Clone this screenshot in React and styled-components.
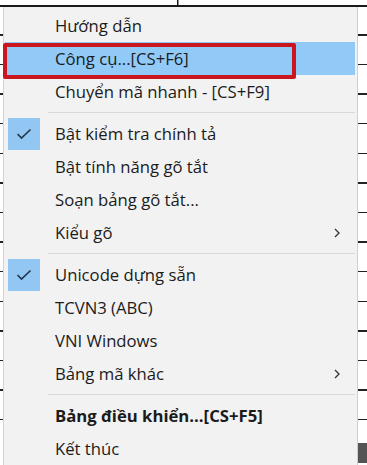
import React from "react";
import styled, { createGlobalStyle } from "styled-components";

const GlobalStyle = createGlobalStyle`
  html, body { margin: 0; padding: 0; background: #ffffff; }
  body { font-family: "Open Sans", "Noto Sans", sans-serif; }
`;

const Page = styled.div`
  position: relative;
  width: 367px;
  height: 465px;
  overflow: hidden;
  box-sizing: border-box;
  padding: 7px 0 0 3px;
  background-color: #ffffff;
  background-image:
    linear-gradient(#1a1a1a, #1a1a1a),
    linear-gradient(#1a1a1a, #1a1a1a),
    linear-gradient(#555555, #555555),
    repeating-linear-gradient(
      to bottom,
      transparent 0px,
      transparent 28.2px,
      #222222 28.2px,
      #222222 29.6px
    );
  background-size: 367px 2px, 1.5px 6px, 9px 20px, 367px 440px;
  background-position: 0 5px, 176.5px 0, 358px 443px, 0 6px;
  background-repeat: no-repeat;
`;

const Menu = styled.div`
  position: relative;
  width: 355px;
  height: 470px;
  box-sizing: border-box;
  padding-top: 2px;
  background: #f2f2f2;
  border-left: 1px solid #d4d4d4;
  border-right: 1px solid #cfcfcf;
  display: flex;
  flex-direction: column;
`;

const Item = styled.div`
  height: 33px;
  margin: 0 2px 0 1px;
  display: grid;
  grid-template-columns: 32px 1fr 24px;
  align-items: center;
  column-gap: 15px;
  padding-left: 3px;
  box-sizing: border-box;
  background: ${(p) => (p.$active ? "#91c9f7" : "transparent")};
  color: #1b1b1b;
  font-size: 16.7px;
  font-weight: ${(p) => (p.$bold ? 700 : 400)};
  white-space: nowrap;
`;

const CheckCell = styled.div`
  width: 32px;
  height: 32px;
  display: flex;
  align-items: center;
  justify-content: center;
  background: ${(p) => (p.$on ? "#92c7f3" : "transparent")};
`;

const Label = styled.span`
  line-height: 33px;
`;

const Arrow = styled.div`
  display: flex;
  align-items: center;
  padding-left: 2px;
`;

const Separator = styled.div`
  height: 9px;
  margin: 0 2px 0 44px;
  display: flex;
  align-items: center;
  &::before {
    content: "";
    display: block;
    width: 100%;
    height: 1px;
    background: #d8d8d8;
  }
`;

const Callout = styled.div`
  position: absolute;
  left: 3px;
  top: 43px;
  width: 293px;
  height: 36px;
  box-sizing: border-box;
  border: 4px solid #c9161f;
  border-radius: 2px;
  pointer-events: none;
`;

const Check = () => (
  <svg width="16" height="12" viewBox="0 0 16 12">
    <polyline
      points="1.5,6 5.5,10 14.5,1.5"
      fill="none"
      stroke="#23384f"
      strokeWidth="1.7"
    />
  </svg>
);

const Chevron = () => (
  <svg width="8" height="10" viewBox="0 0 8 10">
    <polyline
      points="2,1 6,5 2,9"
      fill="none"
      stroke="#333333"
      strokeWidth="1.3"
    />
  </svg>
);

const items = [
  { label: "Hướng dẫn" },
  { label: "Công cụ...[CS+F6]", active: true },
  { label: "Chuyển mã nhanh - [CS+F9]" },
  { sep: true },
  { label: "Bật kiểm tra chính tả", checked: true },
  { label: "Bật tính năng gõ tắt" },
  { label: "Soạn bảng gõ tắt..." },
  { label: "Kiểu gõ", sub: true },
  { sep: true },
  { label: "Unicode dựng sẵn", checked: true },
  { label: "TCVN3 (ABC)" },
  { label: "VNI Windows" },
  { label: "Bảng mã khác", sub: true },
  { sep: true },
  { label: "Bảng điều khiển...[CS+F5]", bold: true },
  { label: "Kết thúc" },
];

export default function App() {
  return (
    <>
      <GlobalStyle />
      <Page>
        <Menu>
          {items.map((it, i) =>
            it.sep ? (
              <Separator key={i} />
            ) : (
              <Item key={i} $active={it.active} $bold={it.bold}>
                <CheckCell $on={it.checked}>{it.checked && <Check />}</CheckCell>
                <Label>{it.label}</Label>
                <Arrow>{it.sub && <Chevron />}</Arrow>
              </Item>
            )
          )}
        </Menu>
        <Callout />
      </Page>
    </>
  );
}
